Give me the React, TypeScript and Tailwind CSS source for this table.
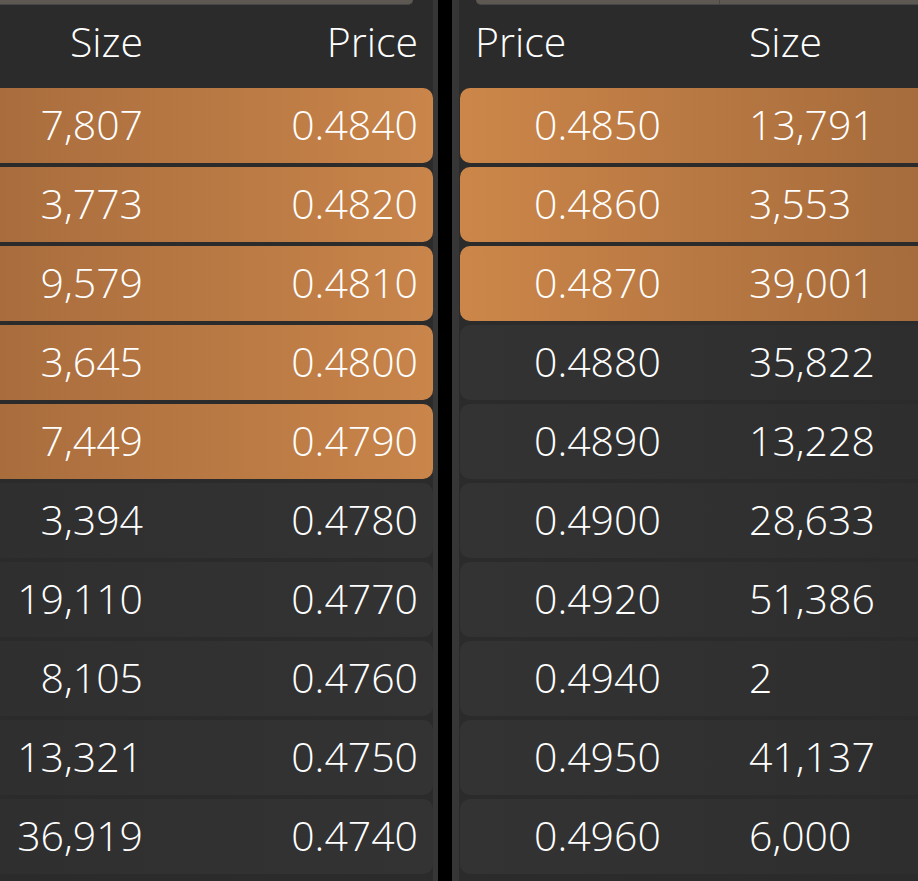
import React from "react";

type Row = { price: string; size: string; hot: boolean };

const bids: Row[] = [
  { size: "7,807", price: "0.4840", hot: true },
  { size: "3,773", price: "0.4820", hot: true },
  { size: "9,579", price: "0.4810", hot: true },
  { size: "3,645", price: "0.4800", hot: true },
  { size: "7,449", price: "0.4790", hot: true },
  { size: "3,394", price: "0.4780", hot: false },
  { size: "19,110", price: "0.4770", hot: false },
  { size: "8,105", price: "0.4760", hot: false },
  { size: "13,321", price: "0.4750", hot: false },
  { size: "36,919", price: "0.4740", hot: false },
];

const asks: Row[] = [
  { price: "0.4850", size: "13,791", hot: true },
  { price: "0.4860", size: "3,553", hot: true },
  { price: "0.4870", size: "39,001", hot: true },
  { price: "0.4880", size: "35,822", hot: false },
  { price: "0.4890", size: "13,228", hot: false },
  { price: "0.4900", size: "28,633", hot: false },
  { price: "0.4920", size: "51,386", hot: false },
  { price: "0.4940", size: "2", hot: false },
  { price: "0.4950", size: "41,137", hot: false },
  { price: "0.4960", size: "6,000", hot: false },
];

function BidSide() {
  return (
    <div className="w-[438px] shrink-0 flex flex-col border-r-[5px] border-[#363636]">
      <div className="h-[5px] w-[413px] rounded-br-xl bg-[#5d5852] border-b border-[#474747]" />
      <div className="h-[83px] flex items-center pb-[10px]">
        <div className="w-[143px] text-right">Size</div>
        <div className="flex-1 text-right pr-[15px]">Price</div>
      </div>
      <div className="flex flex-col gap-[4px]">
        {bids.map((r) => (
          <div
            key={r.price}
            className={`h-[75px] flex items-center pb-[2px] rounded-r-[10px] ${
              r.hot
                ? "bg-gradient-to-r from-[#a96d3d] to-[#c9854a]"
                : "bg-gradient-to-r from-[#2f2f2f] to-[#333333]"
            }`}
          >
            <div className="w-[143px] text-right">{r.size}</div>
            <div className="flex-1 text-right pr-[15px]">{r.price}</div>
          </div>
        ))}
      </div>
    </div>
  );
}

function AskSide() {
  return (
    <div className="flex-1 min-w-0 flex flex-col border-l-[7px] border-[#363636] overflow-hidden">
      <div className="h-[5px] ml-[17px] flex rounded-bl-xl bg-[#5d5852] border-b border-[#474747]">
        <div className="w-[244px] border-r border-[#4a4744]" />
      </div>
      <div className="h-[83px] flex items-center pb-[10px] pl-[1px]">
        <div className="w-[289px] pl-[15px]">Price</div>
        <div>Size</div>
      </div>
      <div className="flex flex-col gap-[4px] pl-[1px]">
        {asks.map((r) => (
          <div
            key={r.price}
            className={`h-[75px] flex items-center pb-[2px] rounded-l-[10px] ${
              r.hot
                ? "bg-gradient-to-r from-[#cc8649] to-[#a66c3c]"
                : "bg-gradient-to-r from-[#333333] to-[#2e2e2e]"
            }`}
          >
            <div className="w-[289px] pl-[74px]">{r.price}</div>
            <div>{r.size}</div>
          </div>
        ))}
      </div>
    </div>
  );
}

export default function App() {
  return (
    <div
      className="w-[918px] h-[881px] overflow-hidden bg-[#2b2b2b] text-white flex text-[41px] leading-none font-light"
      style={{ fontFamily: '"Open Sans", "Noto Sans", sans-serif' }}
    >
      <BidSide />
      <div className="w-[14px] shrink-0 bg-black" />
      <AskSide />
    </div>
  );
}
